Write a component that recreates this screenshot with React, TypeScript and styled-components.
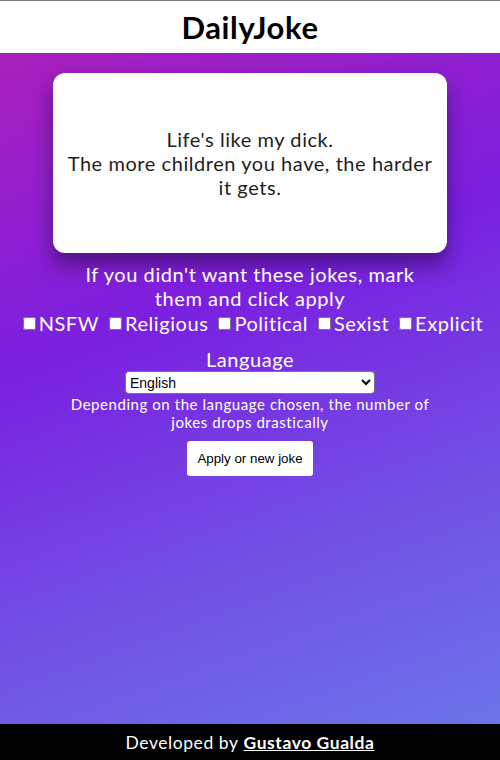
import styled, { createGlobalStyle } from "styled-components"

const GlobalStyle = createGlobalStyle`
    body {
        margin: 0;
        font-family: "Lato", "Open Sans", sans-serif;
        letter-spacing: 0.035em;
    }
`

const categories = ["NSFW", "Religious", "Political", "Sexist", "Explicit"]

export default function App() {
    return (
        <>
            <GlobalStyle />
            <Page>
                <Header>
                    <Title>DailyJoke</Title>
                </Header>

                <Main>
                    <JokeCard>
                        <JokeText>
                            Life's like my dick.
                            <br />
                            The more children you have, the harder it gets.
                        </JokeText>
                    </JokeCard>

                    <FilterText>If you didn't want these jokes, mark them and click apply</FilterText>
                    <CheckRow>
                        {categories.map(c => (
                            <CheckLabel key={c}>
                                <Check type="checkbox" />
                                {c}
                            </CheckLabel>
                        ))}
                    </CheckRow>

                    <LanguageTitle>Language</LanguageTitle>
                    <LanguageSelect defaultValue="en">
                        <option value="en">English</option>
                        <option value="pt">Portuguese</option>
                        <option value="de">German</option>
                    </LanguageSelect>
                    <Note>Depending on the language chosen, the number of jokes drops drastically</Note>
                    <ApplyButton>Apply or new joke</ApplyButton>
                </Main>

                <Footer>
                    Developed by <FooterLink href="#">Gustavo Gualda</FooterLink>
                </Footer>
            </Page>
        </>
    )
}

const Page = styled.div`
    display: flex;
    flex-direction: column;
    height: 760px;
`

const Header = styled.header`
    border-top: 1px solid #7a7a80;
    background: white;
    height: 52px;
    display: flex;
    align-items: center;
    justify-content: center;
`

const Title = styled.h1`
    margin: 0;
    font-size: 31px;
    font-weight: 700;
    letter-spacing: 0.02em;
    color: #000;
`

const Main = styled.main`
    flex: 1;
    display: flex;
    flex-direction: column;
    align-items: center;
    color: white;
    background: linear-gradient(160deg, #aa1fbb 0%, #7a20e0 38%, #7150e4 70%, #6c74e9 100%);
`

const JokeCard = styled.div`
    margin-top: 20px;
    width: 394px;
    height: 180px;
    box-sizing: border-box;
    background: white;
    border-radius: 12px;
    box-shadow: 0 12px 20px rgba(50, 10, 90, 0.65);
    display: flex;
    align-items: center;
    justify-content: center;
    padding: 0 14px;
`

const JokeText = styled.p`
    margin: 0;
    text-align: center;
    font-size: 20px;
    line-height: 24px;
    color: #1e1e1e;
`

const FilterText = styled.p`
    margin: 9px 0 0;
    max-width: 340px;
    text-align: center;
    font-size: 20px;
    line-height: 24px;
`

const CheckRow = styled.div`
    margin-top: 1px;
    padding-left: 6px;
    display: flex;
    gap: 10px;
    font-size: 20px;
    line-height: 24px;
`

const CheckLabel = styled.label`
    display: flex;
    align-items: center;
`

const Check = styled.input`
    width: 13px;
    height: 13px;
    margin: 0 3px 0 0;
`

const LanguageTitle = styled.h2`
    margin: 12px 0 0;
    font-size: 20px;
    line-height: 24px;
    font-weight: 400;
`

const LanguageSelect = styled.select`
    width: 250px;
    height: 23px;
    font-family: "Liberation Sans", Arial, sans-serif;
    font-size: 14px;
    letter-spacing: 0;
    border-radius: 4px;
    border: 1px solid #767676;
    background: white;
`

const Note = styled.p`
    margin: 1px 0 0;
    max-width: 360px;
    text-align: center;
    font-size: 15px;
    line-height: 18px;
`

const ApplyButton = styled.button`
    margin-top: 10px;
    height: 35px;
    padding: 0 10px;
    background: white;
    border: none;
    border-radius: 3px;
    font-family: "Liberation Sans", Arial, sans-serif;
    font-size: 13.33px;
    letter-spacing: 0;
    color: #000;
`

const Footer = styled.footer`
    height: 36px;
    background: black;
    color: white;
    display: flex;
    align-items: center;
    justify-content: center;
    gap: 5px;
    font-size: 17.5px;
`

const FooterLink = styled.a`
    color: white;
    font-weight: 700;
`
